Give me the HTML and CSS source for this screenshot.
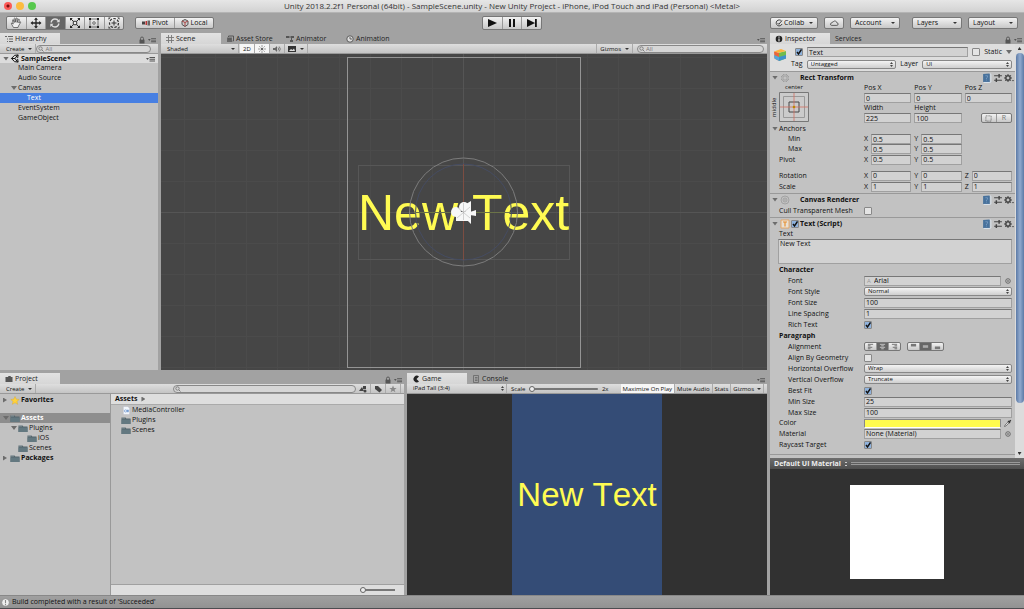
FILE: index.html
```html
<!DOCTYPE html>
<html lang="en">

<head>
    <meta charset="utf-8">
    <meta name="viewport" content="width=device-width, initial-scale=1.0">
    <title>Unity 2018.2.2f1 Personal (64bit) - SampleScene.unity</title>
    <link rel="stylesheet" href="styles.css">
</head>

<body>
    <svg class="defs" aria-hidden="true">
        <symbol id="folder" viewBox="0 0 10 8"><path d="M.5 1h4l.8 1h4.2v5.500h-9z" fill="#54656c"/><path d="M.5 3h9v4.500h-9z" fill="#637880"/><path d="M1 1.500h3" stroke="#a5b4b8" stroke-width=".6"/></symbol>
        <symbol id="lock" viewBox="0 0 8 8"><path d="M2.500 4V2.500a1.500 1.500 0 0 1 3 0V4" fill="none" stroke="#555" stroke-width=".9"/><path d="M1.500 3.700h5V7.500h-5z" fill="#555"/></symbol>
        <symbol id="menu" viewBox="0 0 9 6"><path d="M0 2h3L1.500 4zM3.500 1H9v1H3.500zM3.500 2.700H9v1H3.500zM3.500 4.400H9v1H3.500z" fill="#555"/></symbol>
        <symbol id="list" viewBox="0 0 8 8"><path d="M0 1.500h2M3 1.500h5M2 4h1M4 4h4M2 6.500h1M4 6.500h4" stroke="#666"/></symbol>
        <symbol id="book" viewBox="0 0 9 9"><path d="M1 1l6-.500V8H1z" fill="#48729c"/><path d="M7 .500l1 .6v7L7 8.500H1.500" fill="none" stroke="#dce6f0" stroke-width=".8"/><path d="M3 2.500h2v1.300L4 4.500v1M4 6v.8" fill="none" stroke="#86a8cc" stroke-width=".6"/></symbol>
        <symbol id="preset" viewBox="0 0 9 9"><path d="M1 2.500h7M1 6.500h7" stroke="#444"/><path d="M5.500 .800v3.400M3 4.800v3.400" stroke="#444" stroke-width="1.300"/></symbol>
        <symbol id="gear" viewBox="0 0 10 9"><circle cx="4" cy="4.500" r="2.200" fill="none" stroke="#444" stroke-width="1.500"/><path d="M4 .5v1.200M4 7.300v1.200M0 4.500h1.200M6.800 4.500H8M1.200 1.700l.9.9M6 6.400l.9.900M1.200 7.300l.9-.9M6 2.600l.9-.9" stroke="#444"/><path d="M8 6.500h2L9 8z" fill="#444"/></symbol>
        <symbol id="target" viewBox="0 0 8 8"><circle cx="4" cy="4" r="2.300" fill="none" stroke="#555" stroke-width=".8"/><circle cx="4" cy="4" r=".8" fill="#555"/></symbol>
    </svg>

    <div class="app">
        <header class="titlebar">
            <div class="lights"><i class="red"></i><i class="amber"></i><i class="green"></i></div>
            <h1>Unity 2018.2.2f1 Personal (64bit) - SampleScene.unity - New Unity Project - iPhone, iPod Touch and iPad (Personal) &lt;Metal&gt;</h1>
        </header>

        <div class="toolbar">
            <div class="tools">
                <div class="group">
                    <button aria-label="Hand"><svg viewBox="0 0 12 12"><path d="M3.500 10.500L1.500 7q-.5-1.200.5-1l1.300 1L2.500 3.500q0-1 .8-.7l1 2.700-.2-4q.5-1 1.100 0l.5 3.700.5-4q.8-.8 1.100.1L7.200 5.500l1.200-3.300q.9-.5.9.5L8.800 6l1-1.200q1-.2.8.7L8.500 9 8 10.500z" fill="#eee" stroke="#444" stroke-width=".7"/></svg></button>
                    <button aria-label="Move"><svg viewBox="0 0 12 12"><path d="M6 2v8M2 6h8" stroke="#222" stroke-width="1.300"/><path d="M6 .5l2 2.300H4zM6 11.500l2-2.300H4zM.5 6l2.300-2v4zM11.500 6L9.200 4v4z" fill="#222"/></svg></button>
                    <button aria-label="Rotate" class="on"><svg viewBox="0 0 12 12"><path d="M2 5.500Q3 2 6 2q2.500 0 3.500 2M10 6.500Q9 10 6 10q-2.500 0-3.500-2" fill="none" stroke="#ddd" stroke-width="1.300"/><path d="M10.700 2v3.300H7.500zM1.300 10V6.700h3.200z" fill="#ddd"/></svg></button>
                    <button aria-label="Scale"><svg viewBox="0 0 12 12"><path d="M1.500 1.500l9 9M10.500 1.500l-9 9" stroke="#333"/><path d="M4.300 4.300h3.400v3.400H4.300z" fill="#eee" stroke="#333"/><path d="M1 1h2.800L1 3.800zM11 1v2.800L8.200 1zM1 11V8.200L3.800 11zM11 11H8.200L11 8.200z" fill="#222"/></svg></button>
                    <button aria-label="Rect"><svg viewBox="0 0 12 12"><path d="M2 2h8v8H2z" fill="none" stroke="#555" stroke-width=".8"/><circle cx="6" cy="6" r="1.300" fill="none" stroke="#555" stroke-width=".8"/><path d="M1 1h2v2H1zM9 1h2v2H9zM1 9h2v2H1zM9 9h2v2H9z" fill="#222"/></svg></button>
                    <button aria-label="Transform"><svg viewBox="0 0 12 12"><circle cx="6" cy="6" r="4.500" fill="none" stroke="#333" stroke-width="1.200" stroke-dasharray="2.500 1.500"/><path d="M6 3.500v5M3.500 6h5" stroke="#333"/><path d="M.5.5h2.300L.5 2.800zM11.500.5v2.300L9.200.5zM.5 11.500V9.200l2.300 2.300zM11.500 11.500H9.200l2.300-2.300z" fill="#333"/></svg></button>
                </div>
                <div class="group pivots">
                    <button><svg viewBox="0 0 8 8"><path d="M0 2.500h3v3H0z" fill="#444"/><path d="M3.500 2h1.500v4H3.500z" fill="#b33"/><path d="M5.500 1.500H8v5H5.500z" fill="#666"/></svg>Pivot</button>
                    <button><svg viewBox="0 0 8 8"><path d="M4 .5L7 2v3.500L4 7.500 1 5.500V2z" fill="#ccc" stroke="#555"/><path d="M1 2l3 1.500L7 2M4 3.500v4" stroke="#a44" fill="none"/></svg>Local</button>
                </div>
            </div>
            <div class="group play">
                <button aria-label="Play"><svg viewBox="0 0 12 12"><path d="M2 2l9 4-9 4z" fill="#111"/></svg></button>
                <button aria-label="Pause"><svg viewBox="0 0 12 12"><path d="M3 2h2v8H3zM7 2h2v8H7z" fill="#111"/></svg></button>
                <button aria-label="Step"><svg viewBox="0 0 12 12"><path d="M1 2l8 4-8 4zM9 2h1.800v8H9z" fill="#111"/></svg></button>
            </div>
            <div class="menus">
                <button class="drop"><svg viewBox="0 0 8 8"><path d="M6.500 2A3 3 0 1 0 7 5" fill="none" stroke="#444"/><path d="M2.500 4l1.300 1.300L7 1.500" fill="none" stroke="#444"/></svg>Collab</button>
                <button class="cloud" aria-label="Services"><svg viewBox="0 0 12 10"><path d="M3 8h6.500a1.600 1.600 0 0 0 0-3.300A2.500 2.500 0 0 0 5 3.500 2 2 0 0 0 3.200 5 1.500 1.500 0 0 0 3 8z" fill="none" stroke="#333" stroke-width=".9"/></svg></button>
                <button class="drop wide">Account</button>
                <button class="drop wide gap">Layers</button>
                <button class="drop wide">Layout</button>
            </div>
        </div>

        <main class="workspace">
            <div class="left">
                <div class="upper">
                    <section class="panel hierarchy">
                        <nav class="tabs">
                            <button class="tab on"><svg><use href="#list"/></svg>Hierarchy</button>
                            <span class="corner"><svg><use href="#lock"/></svg><svg><use href="#menu"/></svg></span>
                        </nav>
                        <div class="bar">
                            <button class="drop flat">Create</button>
                            <input class="search" type="search" placeholder="All" aria-label="Search hierarchy">
                        </div>
                        <ul class="tree">
                            <li class="scene"><i class="fold"></i><svg viewBox="0 0 10 10"><path d="M1 5l3.500-3.500L8.500 1l-.6 3.500M1 5l3.500 3.500 4 .5-.6-3.500M1 5h4l3-4M5 5l3 4" fill="none" stroke="#111" stroke-width="1.100"/></svg><b>SampleScene*</b><svg class="more"><use href="#menu"/></svg></li>
                            <li class="in1">Main Camera</li>
                            <li class="in1">Audio Source</li>
                            <li class="in1 folded"><i class="fold"></i>Canvas</li>
                            <li class="in2 picked">Text</li>
                            <li class="in1">EventSystem</li>
                            <li class="in1">GameObject</li>
                        </ul>
                    </section>

                    <section class="panel scene-panel">
                        <nav class="tabs">
                            <button class="tab on"><svg viewBox="0 0 8 8"><path d="M2.500 0v8M5.500 0v8M0 2.500h8M0 5.500h8" stroke="#777" stroke-width=".9"/></svg>Scene</button>
                            <button class="tab"><svg viewBox="0 0 8 8"><path d="M1 2.500h5V7H1z" fill="#666"/><path d="M2.500 2V1h5v5h-1M2 4h3" stroke="#555" fill="none"/></svg>Asset Store</button>
                            <button class="tab"><svg viewBox="0 0 8 8"><path d="M0 1h3v2H0zM5 1h3v2H5zM4 5h3v2H4z" fill="#555"/><path d="M3 2h2M5.500 3v2" stroke="#555"/></svg>Animator</button>
                            <button class="tab"><svg viewBox="0 0 8 8"><circle cx="4" cy="4" r="3.200" fill="#ddd" stroke="#444" stroke-width=".8"/><path d="M4 2v2h2" stroke="#444" fill="none" stroke-width=".8"/></svg>Animation</button>
                            <span class="corner"><svg><use href="#menu"/></svg></span>
                        </nav>
                        <div class="bar">
                            <button class="drop flat shading">Shaded</button>
                            <button class="flat lit">2D</button>
                            <button class="flat lit" aria-label="Lighting"><svg viewBox="0 0 8 8"><circle cx="4" cy="4" r="1.300" fill="#666"/><path d="M4 0v2M4 6v2M0 4h2M6 4h2M1.200 1.200l1.300 1.300M5.500 5.500l1.300 1.300M1.200 6.800l1.300-1.300M5.500 2.500l1.300-1.300" stroke="#666" stroke-width=".6"/></svg></button>
                            <button class="flat" aria-label="Audio"><svg viewBox="0 0 8 8"><path d="M0 3h2l2-2v6L2 5H0z" fill="#666"/><path d="M5 2.500q1.300 1.500 0 3M6.200 1.500q2.200 2.500 0 5" fill="none" stroke="#666" stroke-width=".8"/></svg></button>
                            <button class="flat drop" aria-label="Effects"><svg viewBox="0 0 8 8"><path d="M0 1h8v6H0z" fill="#333"/><path d="M1 6l2-2 1.500 1L6 3.500 7 6z" fill="#ddd"/></svg></button>
                            <span class="grow"></span>
                            <button class="drop flat first">Gizmos</button>
                            <input class="search fixed" type="search" placeholder="All" aria-label="Search scene">
                        </div>
                        <svg class="scene-view" viewBox="0 0 606 316" preserveAspectRatio="xMidYMid slice">
                            <defs>
                                <pattern id="grid" width="31" height="31" x="23" y="3" patternUnits="userSpaceOnUse"><path d="M.5 0v31M0 .5h31" stroke="#4b4b4b" fill="none"/></pattern>
                            </defs>
                            <rect width="606" height="316" fill="#464646"/>
                            <rect width="606" height="316" fill="url(#grid)"/>
                            <path d="M302.500 0v316M0 158.500h606" stroke="#555"/>
                            <rect x="186.500" y="3.500" width="233" height="310" fill="none" stroke="#949494"/>
                            <rect x="197.500" y="111.500" width="211" height="94" fill="none" stroke="#575757"/>
                            <text x="197" y="176">New Text</text>
                            <circle cx="302.500" cy="158" r="54" fill="none" stroke="#7c7c7c"/>
                            <circle cx="302.500" cy="158" r="48" fill="none" stroke="#454c62"/>
                            <path d="M302.500 110v96" stroke="#7c4d42"/>
                            <path d="M254 158.500h96" stroke="#6b7348"/>
                            <g fill="#f7f7f7"><circle cx="295" cy="158" r="5"/><circle cx="303" cy="153" r="5"/><path d="M295 158h12v9h-12zM305 150l5-3v23l-6-6zM309 158l6-2v6l-6-1z"/></g>
                            <path d="M302.500 149v17M296 153l13 11M309 153l-13 11" stroke="#aaa" stroke-width=".5"/>
                        </svg>
                    </section>
                </div>

                <div class="lower">
                    <section class="panel project">
                        <nav class="tabs">
                            <button class="tab on"><svg viewBox="0 0 8 8"><path d="M.5 2H3l.5-1h2L6 2h1.500v5h-7z" fill="#555"/></svg>Project</button>
                            <span class="corner"><svg><use href="#lock"/></svg><svg><use href="#menu"/></svg></span>
                        </nav>
                        <div class="bar">
                            <button class="drop flat">Create</button>
                            <span class="grow"></span>
                            <input class="search long" type="search" aria-label="Search project">
                            <button class="flat" aria-label="By type"><svg viewBox="0 0 8 8"><path d="M0 6l3-4 2 4zM4 1h3v3H4z" fill="#444"/><circle cx="6" cy="6" r="1.500" fill="#444"/></svg></button>
                            <button class="flat" aria-label="By label"><svg viewBox="0 0 8 8"><path d="M1 1h3l4 4-2.500 2.500L1 4z" fill="#444"/></svg></button>
                            <button class="flat" aria-label="Save search"><svg viewBox="0 0 8 8"><path d="M4 .5l1 2.500h2.600L5.500 4.700l.9 2.600L4 5.700 1.600 7.300l.9-2.600L.4 3H3z" fill="#888"/></svg></button>
                        </div>
                        <div class="browser">
                            <ul class="tree">
                                <li class="fav"><i class="fold shut"></i><svg viewBox="0 0 10 10"><path d="M5 .5l1.400 3 3.300.3L7.200 6l.8 3.300-3-1.800-3 1.800L2.800 6 .3 3.800l3.300-.3z" fill="#ffd23c" stroke="#d8a520" stroke-width=".4"/></svg><b>Favorites</b></li>
                                <li class="chosen"><i class="fold"></i><svg><use href="#folder"/></svg><b>Assets</b></li>
                                <li class="sub1"><i class="fold"></i><svg><use href="#folder"/></svg>Plugins</li>
                                <li class="sub3"><svg><use href="#folder"/></svg>iOS</li>
                                <li class="sub2"><svg><use href="#folder"/></svg>Scenes</li>
                                <li><i class="fold shut"></i><svg><use href="#folder"/></svg><b>Packages</b></li>
                            </ul>
                            <div class="files">
                                <div class="crumbs"><b>Assets</b><i class="fold shut"></i></div>
                                <ul class="tree">
                                    <li><svg viewBox="0 0 10 10"><path d="M2 .5h5L9 2.500v7H2z" fill="#f2f6fb" stroke="#aab" stroke-width=".4"/><path d="M5 4.500a1.200 1.200 0 1 0 0 2M6 4v3M7.300 4v3M5.500 5h2.500M5.500 6h2.500" stroke="#4a7cc4" fill="none" stroke-width=".6"/></svg>MediaController</li>
                                    <li><svg><use href="#folder"/></svg>Plugins</li>
                                    <li><svg><use href="#folder"/></svg>Scenes</li>
                                </ul>
                                <div class="foot"><input class="zoom" type="range" value="0" aria-label="Icon size"></div>
                            </div>
                        </div>
                    </section>

                    <section class="panel game">
                        <nav class="tabs">
                            <button class="tab on"><svg viewBox="0 0 8 8"><path d="M7 1.500A3.300 3.300 0 1 0 7 6.500L4.500 4z" fill="#222"/></svg>Game</button>
                            <button class="tab"><svg viewBox="0 0 8 8"><path d="M1.500.5h5v7h-5zM3 2.500h2.500M3 4h2.500M3 5.500h2.500" stroke="#666" fill="none" stroke-width=".8"/></svg>Console</button>
                            <span class="corner"><svg><use href="#menu"/></svg></span>
                        </nav>
                        <div class="bar">
                            <select class="aspect" aria-label="Aspect"><option>iPad Tall (3:4)</option></select>
                            <label for="scale">Scale</label>
                            <input id="scale" class="zoom grow" type="range" value="0">
                            <span class="times">2x</span>
                            <button class="flat lit">Maximize On Play</button>
                            <button class="flat">Mute Audio</button>
                            <button class="flat">Stats</button>
                            <button class="flat drop">Gizmos</button>
                        </div>
                        <div class="game-view"><div class="screen">New Text</div></div>
                    </section>
                </div>
            </div>

            <aside class="panel inspector">
                <nav class="tabs">
                    <button class="tab on"><svg viewBox="0 0 8 8"><circle cx="4" cy="4" r="3.300" fill="#222"/><path d="M4 1.500v1.200M4 3.500v3" stroke="#ddd" stroke-width="1.200"/></svg>Inspector</button>
                    <button class="tab">Services</button>
                    <span class="corner"><svg><use href="#lock"/></svg><svg><use href="#menu"/></svg></span>
                </nav>
                <div class="scroller">
                    <div class="props">
                        <div class="object">
                            <svg class="cube" viewBox="0 0 14 14"><path d="M1 3.500l5 1.300V13L1.500 10.500z" fill="#e8673c"/><path d="M1 7l5 2v4L1.500 10.500z" fill="#50a8dc"/><path d="M6 4.800L13 3v7.500L6 13z" fill="#70bc4c"/><path d="M1 3.500L8 1l5 2-7 1.800z" fill="#ffb43c"/><path d="M6 9l7-2v3.500L6 13z" fill="#3f90cc"/></svg>
                            <div class="object-rows">
                                <div class="line">
                                    <input type="checkbox" checked aria-label="Active">
                                    <input class="grow" type="text" value="Text" aria-label="Name">
                                    <input type="checkbox" id="static"><label for="static">Static</label><i class="fold"></i>
                                </div>
                                <div class="line">
                                    <label for="tag">Tag</label><select id="tag" class="grow"><option>Untagged</option></select>
                                    <label for="layer">Layer</label><select id="layer" class="grow"><option>UI</option></select>
                                </div>
                            </div>
                        </div>

                        <div class="head"><i class="fold"></i><svg viewBox="0 0 10 10"><path d="M4 4H1l3-3zM6 4V1l3 3zM4 6v3L1 6zM6 6h3L6 9z" fill="none" stroke="#999" stroke-width=".8"/></svg><span class="tick"></span><b>Rect Transform</b>
                            <svg class="act"><use href="#book"/></svg><svg><use href="#preset"/></svg><svg><use href="#gear"/></svg></div>
                        <div class="rect">
                            <div class="anchor">
                                <span class="h">center</span><span class="v">middle</span>
                                <svg viewBox="0 0 30 30"><path d="M.5.5h29v29H.5z" fill="#cbcbcb" stroke="#777"/><path d="M4.500 4.500h21v21h-21z" fill="none" stroke="#999"/><path d="M10 10h10v10H10z" fill="none" stroke="#444"/><path d="M15 1v28M1 15h28" stroke="#d07060" stroke-width=".8"/><circle cx="15" cy="15" r="1.300" fill="#b80"/></svg>
                            </div>
                            <div class="cells">
                                <label for="px">Pos X</label><label for="py">Pos Y</label><label for="pz">Pos Z</label>
                                <input type="text" id="px" value="0"><input type="text" id="py" value="0"><input type="text" id="pz" value="0">
                                <label for="w">Width</label><label for="h">Height</label><span></span>
                                <input type="text" id="w" value="225"><input type="text" id="h" value="100">
                                <div class="group raw"><button aria-label="Blueprint mode"><svg viewBox="0 0 8 8"><path d="M1 1h6v6H1z" fill="none" stroke="#555" stroke-dasharray="1 1"/></svg></button><button>R</button></div>
                            </div>
                        </div>
                        <div class="line fold-line"><i class="fold"></i>Anchors</div>
                        <div class="row sub short"><span>Min</span><div class="xyz"><label>X<input type="text" value="0.5"></label><label>Y<input type="text" value="0.5"></label></div></div>
                        <div class="row sub short"><span>Max</span><div class="xyz"><label>X<input type="text" value="0.5"></label><label>Y<input type="text" value="0.5"></label></div></div>
                        <div class="row"><span>Pivot</span><div class="xyz"><label>X<input type="text" value="0.5"></label><label>Y<input type="text" value="0.5"></label></div></div>
                        <div class="row spaced"><span>Rotation</span><div class="xyz"><label>X<input type="text" value="0"></label><label>Y<input type="text" value="0"></label><label>Z<input type="text" value="0"></label></div></div>
                        <div class="row"><span>Scale</span><div class="xyz"><label>X<input type="text" value="1"></label><label>Y<input type="text" value="1"></label><label>Z<input type="text" value="1"></label></div></div>

                        <div class="head next"><i class="fold"></i><svg viewBox="0 0 10 10"><circle cx="5" cy="5" r="4" fill="none" stroke="#999" stroke-width=".8"/><circle cx="5" cy="5" r="2" fill="none" stroke="#999" stroke-width=".8"/><circle cx="5" cy="5" r=".8" fill="#999"/></svg><span class="tick"></span><b>Canvas Renderer</b>
                            <svg class="act"><use href="#book"/></svg><svg><use href="#preset"/></svg><svg><use href="#gear"/></svg></div>
                        <div class="row"><label for="cull">Cull Transparent Mesh</label><input type="checkbox" id="cull"></div>

                        <div class="head next"><i class="fold"></i><svg viewBox="0 0 10 10"><path d="M1 1h8v8H1z" fill="#e8e0d4" stroke="#e8a050" stroke-width=".8"/><path d="M3 3h4M5 3v4.500" stroke="#e89030" stroke-width="1.200"/></svg><span class="tick"><input type="checkbox" checked aria-label="Enabled"></span><b>Text (Script)</b>
                            <svg class="act"><use href="#book"/></svg><svg><use href="#preset"/></svg><svg><use href="#gear"/></svg></div>
                        <div class="row short"><label for="body">Text</label></div>
                        <textarea id="body">New Text</textarea>
                        <div class="row"><b>Character</b></div>
                        <div class="row sub"><label for="font">Font</label><div class="pick"><span class="aa">A</span><input type="text" id="font" class="with-icon" value="Arial"><svg><use href="#target"/></svg></div></div>
                        <div class="row sub"><label for="fstyle">Font Style</label><select id="fstyle"><option>Normal</option></select></div>
                        <div class="row sub"><label for="fsize">Font Size</label><input type="text" id="fsize" value="100"></div>
                        <div class="row sub"><label for="lsp">Line Spacing</label><input type="text" id="lsp" value="1"></div>
                        <div class="row sub"><label for="rich">Rich Text</label><input type="checkbox" id="rich" checked></div>
                        <div class="row"><b>Paragraph</b></div>
                        <div class="row sub"><span>Alignment</span>
                            <div class="aligns">
                                <div class="group"><button aria-label="Left"><svg viewBox="0 0 8 8"><path d="M1 1.500h6M1 3.200h3M1 4.900h5M1 6.600h3" stroke="#666"/></svg></button><button class="on" aria-label="Center"><svg viewBox="0 0 8 8"><path d="M1 1.500h6M2.500 3.200h3M1 4.900h6M2.500 6.600h3" stroke="#ccc"/></svg></button><button aria-label="Right"><svg viewBox="0 0 8 8"><path d="M1 1.500h6M4 3.200h3M2 4.900h5M4 6.600h3" stroke="#666"/></svg></button></div>
                                <div class="group"><button aria-label="Top"><svg viewBox="0 0 8 8"><path d="M1 1h6v3H1z" fill="#777"/></svg></button><button class="on" aria-label="Middle"><svg viewBox="0 0 8 8"><path d="M1 2.500h6v3H1z" fill="#aaa"/></svg></button><button aria-label="Bottom"><svg viewBox="0 0 8 8"><path d="M1 4h6v3H1z" fill="#777"/></svg></button></div>
                            </div>
                        </div>
                        <div class="row sub"><label for="geo">Align By Geometry</label><input type="checkbox" id="geo"></div>
                        <div class="row sub"><label for="ho">Horizontal Overflow</label><select id="ho"><option>Wrap</option></select></div>
                        <div class="row sub"><label for="vo">Vertical Overflow</label><select id="vo"><option>Truncate</option></select></div>
                        <div class="row sub"><label for="fit">Best Fit</label><input type="checkbox" id="fit" checked></div>
                        <div class="row sub"><label for="min">Min Size</label><input type="text" id="min" value="25"></div>
                        <div class="row sub"><label for="max">Max Size</label><input type="text" id="max" value="100"></div>
                        <div class="row short"><span>Color</span><div class="pick"><button class="swatch" aria-label="Color"></button><svg viewBox="0 0 8 8"><path d="M.5 7.500L1 6l3.500-3.500 1 1L2 7z" fill="#ddd" stroke="#444" stroke-width=".6"/><path d="M4 2l2 2M5 3l1.800-1.800" stroke="#333" stroke-width="1.400"/></svg></div></div>
                        <div class="row"><label for="mat">Material</label><div class="pick"><input type="text" id="mat" value="None (Material)"><svg><use href="#target"/></svg></div></div>
                        <div class="row"><label for="ray">Raycast Target</label><input type="checkbox" id="ray" checked></div>
                        <div class="head cut"></div>
                    </div>
                    <div class="scrollbar"><span class="up"></span><span class="thumb"></span><span class="rest"></span><span class="down"></span></div>
                </div>
                <div class="preview-bar"><b>Default UI Material</b><i></i><span></span></div>
                <div class="preview"><div class="quad"></div></div>
            </aside>
        </main>

        <footer class="status">
            <svg viewBox="0 0 10 10"><circle cx="5" cy="5" r="4.200" fill="#eee" stroke="#777" stroke-width=".6"/><path d="M5 2.300v3.500M5 6.800v1.200" stroke="#888" stroke-width="1.200"/></svg>
            Build completed with a result of 'Succeeded'
        </footer>
    </div>
</body>

</html>
```
FILE: styles.css
```css
* {
    box-sizing: border-box;
}

body {
    margin: 0;
    font: 7px/10px "Open Sans", "Noto Sans", sans-serif;
    font-weight: 500;
    color: #111;
    background: #a2a2a2;
}

button, input, select, textarea {
    appearance: none;
    margin: 0;
    padding: 0;
    border: 0;
    border-radius: 0;
    font: inherit;
    color: inherit;
    background: none;
}

ul {
    list-style: none;
    margin: 0;
    padding: 0;
}

svg {
    width: 8px;
    height: 8px;
    flex: none;
}

.defs {
    display: none;
}

.grow {
    flex: 1;
    min-width: 0;
}

.app {
    display: flex;
    flex-direction: column;
    height: 100vh;
    border-bottom: 1px solid #4c4c50;
}

/* window title */
.titlebar {
    display: grid;
    grid-template-columns: 1fr auto 1fr;
    align-items: center;
    height: 13px;
    background: linear-gradient(#e6e6e6, #d2d2d2);
    border-bottom: 1px solid #b4b4b4;
}

.titlebar h1 {
    margin: 0;
    font: 8px/12px "Open Sans", sans-serif;
    color: #333;
}

.lights {
    display: flex;
    gap: 4px;
    padding-left: 4px;
}

.lights i {
    width: 8px;
    height: 8px;
    border-radius: 50%;
}

.red {
    background: radial-gradient(#7a1010 1px, #fc5b57 2px);
}

.amber {
    background: #fcbc40;
}

.green {
    background: #57c84d;
}

/* main toolbar */
.toolbar {
    display: grid;
    grid-template-columns: 1fr auto 1fr;
    align-items: center;
    height: 20px;
    padding: 0 6px;
}

.tools, .menus {
    display: flex;
    align-items: center;
}

.menus {
    justify-content: flex-end;
    gap: 6px;
}

.group {
    display: flex;
    border: 1px solid #777;
    border-radius: 2px;
    background: linear-gradient(#f2f2f2, #c8c8c8);
}

.group button {
    display: flex;
    flex: 1;
    align-items: center;
    justify-content: center;
}

.group button + button {
    border-left: 1px solid #999;
}

.group .on {
    background: #666;
}

.tools .group, .play {
    width: 118px;
    height: 14px;
}

.tools svg, .play svg {
    width: 12px;
    height: 12px;
}

.play {
    width: 60px;
}

.tools .pivots {
    width: 79px;
    height: 12px;
    margin-left: 11px;
    font-size: 7px;
}

.pivots button {
    gap: 2px;
}

.pivots svg {
    width: 8px;
    height: 8px;
}

.menus button {
    display: flex;
    align-items: center;
    height: 12px;
    padding: 0 4px;
    font-size: 7px;
    border: 1px solid #777;
    border-radius: 2px;
    background: linear-gradient(#f2f2f2, #c8c8c8);
}

.menus .wide {
    width: 50px;
}

.menus .gap {
    margin-left: 6px;
}

.menus .cloud {
    width: 20px;
}

.cloud svg {
    width: 10px;
}

.menus button svg {
    margin-right: 1px;
}

.drop::after {
    content: "";
    margin-left: auto;
    border: 2px solid transparent;
    border-top-color: #333;
    border-bottom: 0;
}

.menus .drop {
    min-width: 48px;
}

/* panels */
.workspace {
    display: grid;
    grid-template-columns: 767fr 254fr;
    gap: 3px;
    flex: 1;
    min-height: 0;
}

.left {
    display: grid;
    grid-template-rows: 337fr 222fr;
    gap: 3px;
    min-height: 0;
}

.upper, .lower {
    display: grid;
    grid-template-columns: 158fr 606fr;
    gap: 3px;
    min-height: 0;
}

.lower {
    grid-template-columns: 404fr 360fr;
}

.panel {
    display: flex;
    flex-direction: column;
    min-width: 0;
    min-height: 0;
}

.tabs {
    display: flex;
    height: 11px;
    flex: none;
    font-size: 7px;
}

.tab {
    display: flex;
    align-items: center;
    gap: 2px;
    min-width: 60px;
    padding: 0 5px;
    color: #222;
}

.tab.on {
    background: linear-gradient(#e2e2e2, #d6d6d6);
}

.corner {
    display: flex;
    align-items: flex-end;
    gap: 2px;
    margin-left: auto;
    padding-right: 2px;
}

.bar {
    display: flex;
    align-items: center;
    height: 10px;
    flex: none;
    padding: 0 3px;
    font-size: 6px;
    background: linear-gradient(#dedede, #c4c4c4);
    border-bottom: 1px solid #999;
}

.flat {
    display: flex;
    align-items: center;
    gap: 4px;
    height: 9px;
    padding: 0 3px;
    border-right: 1px solid #aaa;
    font-size: 6px;
    white-space: nowrap;
}

.flat.first {
    border-left: 1px solid #aaa;
}

.lit {
    background: #f6f6f6;
}

.shading {
    width: 75px;
    margin-right: 1px;
}

.search {
    flex: 1;
    min-width: 0;
    height: 8px;
    margin-left: 4px;
    padding-left: 8px;
    border: 1px solid #888;
    border-radius: 4px;
    font-size: 6px;
    line-height: 6px;
    background: #d6d6d6 url("data:image/svg+xml,%3Csvg xmlns='http://www.w3.org/2000/svg' width='8' height='6'%3E%3Ccircle cx='3.500' cy='2.500' r='1.700' fill='none' stroke='%23666' stroke-width='.7'/%3E%3Cpath d='M5 4l1.500 1.500' stroke='%23666' stroke-width='.8'/%3E%3C/svg%3E") no-repeat;
}

.search::placeholder {
    color: #777;
}

.search.fixed {
    flex: 0 0 127px;
}

.search.long {
    flex: 0 0 183px;
}

.hierarchy .search {
    margin-left: 0;
    margin-right: 4px;
}

/* trees */
.hierarchy, .project {
    background: linear-gradient(#a2a2a2 11px, #c2c2c2 11px);
}

.tree li {
    display: flex;
    align-items: center;
    height: 10px;
    padding-left: 3px;
}

.tree li svg {
    width: 10px;
    height: 9px;
    margin-right: 1px;
}

.fold {
    flex: none;
    width: 6px;
    height: 4px;
    margin-right: 1px;
    background: #6c6c6c;
    clip-path: polygon(0 0, 100% 0, 50% 100%);
}

.fold.shut {
    width: 4px;
    height: 5px;
    margin-right: 3px;
    clip-path: polygon(0 0, 100% 50%, 0 100%);
}

.tree .scene {
    height: 9px;
    background: #dcdcdc;
}

.tree .scene .more {
    width: 9px;
    height: 6px;
    margin-left: auto;
    margin-right: 3px;
}

.tree .in1 {
    padding-left: 18px;
}

.tree .folded {
    padding-left: 11px;
}

.tree .in2 {
    padding-left: 27px;
}

.tree .picked {
    color: #fff;
    background: #477fe2;
}

.browser {
    display: flex;
    flex: 1;
    min-height: 0;
}

.browser > .tree {
    width: 111px;
    padding-top: 1px;
    border-right: 1px solid #999;
}

.tree .fav {
    margin-bottom: 8px;
}

.tree .chosen {
    color: #fff;
    background: #8e8e8e;
}

.tree .sub1 {
    padding-left: 11px;
}

.tree .sub2 {
    padding-left: 18px;
}

.tree .sub3 {
    padding-left: 27px;
}

.files {
    display: flex;
    flex-direction: column;
    flex: 1;
}

.files .tree {
    flex: 1;
}

.files .tree li {
    padding-left: 10px;
}

.crumbs {
    display: flex;
    align-items: center;
    gap: 4px;
    height: 11px;
    padding-left: 4px;
    background: #dedede;
    border-bottom: 1px solid #aaa;
}

.foot {
    display: flex;
    align-items: center;
    justify-content: flex-end;
    height: 11px;
    padding-right: 9px;
    background: #dedede;
    border-top: 1px solid #a0a0a0;
}

.zoom {
    width: 35px;
    height: 8px;
    background: linear-gradient(#777, #777) no-repeat center / 100% 2px;
}

.zoom::-webkit-slider-thumb {
    appearance: none;
    width: 6px;
    height: 6px;
    border: 1px solid #666;
    border-radius: 50%;
    background: #eee;
}

/* views */
.scene-view {
    flex: 1;
    width: 100%;
    min-height: 0;
}

.scene-view text {
    font: 50px "Liberation Sans", sans-serif;
    font-kerning: none;
    fill: #fffb52;
}

.game .bar label {
    padding: 0 4px;
}

.game .bar .flat {
    gap: 3px;
    padding: 0 2px;
}

.aspect {
    width: 97px;
}

.game .times {
    padding: 0 12px 0 4px;
}

.game-view {
    display: flex;
    justify-content: center;
    flex: 1;
    min-height: 0;
    background: #313131;
}

.screen {
    display: grid;
    place-items: center;
    height: 100%;
    aspect-ratio: 3 / 4;
    font: 33px "Liberation Sans", sans-serif;
    font-kerning: none;
    white-space: nowrap;
    color: #fffb52;
    background: #344c76;
}

/* inspector */
.scroller {
    display: flex;
    flex: none;
    background: #c2c2c2;
}

.props {
    flex: 1;
    min-width: 0;
}

.object {
    display: flex;
    gap: 4px;
    height: 27px;
    padding: 2px 3px 0;
    background: #dedede;
}

.cube {
    width: 14px;
    height: 14px;
    margin-top: 2px;
}

.object-rows {
    flex: 1;
}

.line {
    display: flex;
    align-items: center;
    gap: 4px;
    height: 12px;
}

.object .line:first-child {
    padding-left: 4px;
}

.object .line:first-child .fold {
    margin-right: 0;
}

.fold-line {
    gap: 0;
    height: 11px;
    padding-left: 2px;
}

input[type=text], textarea {
    min-width: 0;
    height: 10px;
    padding: 0 1px;
    line-height: 8px;
    border: 1px solid #a0a0a0;
    border-top-color: #777;
    background: #d2d2d2;
}

input[type=checkbox] {
    width: 8px;
    height: 8px;
    border: 1px solid #888;
    border-radius: 1px;
    background: #e4e4e4;
}

input[type=checkbox]:checked {
    background: #8fb2dc url("data:image/svg+xml,%3Csvg xmlns='http://www.w3.org/2000/svg' width='6' height='6'%3E%3Cpath d='M1 3l1.500 2L5.500.5' fill='none' stroke='%23111' stroke-width='1.400'/%3E%3C/svg%3E") no-repeat center;
}

select {
    height: 9px;
    padding: 0 3px;
    font-size: 6px;
    line-height: 7px;
    border: 1px solid #888;
    border-radius: 2px;
    background: url("data:image/svg+xml,%3Csvg xmlns='http://www.w3.org/2000/svg' width='5' height='5'%3E%3Cpath d='M0 2l1.500-2L3 2zM0 3h3L1.500 5z' fill='%23444'/%3E%3C/svg%3E") no-repeat right center, linear-gradient(#f4f4f4, #cfcfcf);
}

select.aspect {
    border: 0;
    border-right: 1px solid #aaa;
    border-radius: 0;
    background-color: transparent;
    background-image: url("data:image/svg+xml,%3Csvg xmlns='http://www.w3.org/2000/svg' width='5' height='5'%3E%3Cpath d='M0 2l1.500-2L3 2zM0 3h3L1.500 5z' fill='%23444'/%3E%3C/svg%3E");
}

.head {
    display: flex;
    align-items: center;
    height: 12px;
    padding: 0 1px 0 2px;
    border-top: 1px solid #999;
}

.head.next {
    margin-top: 1px;
}

.head svg {
    width: 10px;
    height: 10px;
    margin-left: 1px;
}

.head .act {
    margin-left: auto;
}

.head.cut {
    height: 4px;
    margin-top: 4px;
}

.tick {
    display: flex;
    width: 9px;
    margin-left: 1px;
}

.rect {
    display: flex;
    padding-right: 3px;
}

.anchor {
    display: grid;
    grid-template: 9px 30px / 9px 30px;
    width: 94px;
    flex: none;
    font-size: 6px;
    line-height: 8px;
}

.anchor .h {
    grid-column: 2;
    text-align: center;
}

.anchor .v {
    writing-mode: vertical-rl;
    transform: rotate(180deg);
    text-align: center;
}

.anchor svg {
    width: 30px;
    height: 30px;
}

.cells {
    display: grid;
    grid-template-columns: repeat(3, 1fr);
    grid-auto-rows: 10px;
    gap: 0 3px;
    flex: 1;
    min-width: 0;
}

.cells input {
    width: 100%;
}

.raw {
    justify-self: end;
    width: 31px;
    color: #777;
}

.raw svg {
    width: 7px;
    height: 7px;
}

.row {
    display: grid;
    grid-template-columns: 85px 1fr;
    align-items: center;
    height: 11px;
    padding: 0 3px 0 9px;
}

.row.sub {
    grid-template-columns: 76px 1fr;
    padding-left: 18px;
}

.row.short {
    height: 10px;
}

.row.spaced {
    margin-top: 5px;
}

.row > input[type=text] {
    width: 100%;
}

.row > label, .row > span, .row > b {
    white-space: nowrap;
}

.xyz {
    display: grid;
    grid-template-columns: repeat(3, 1fr);
    gap: 3px;
}

.xyz label {
    display: grid;
    grid-template-columns: 7px 1fr;
}

.xyz input {
    width: 100%;
}

textarea {
    display: block;
    width: calc(100% - 11px);
    height: 25px;
    margin-left: 8px;
    resize: none;
}

.pick {
    display: flex;
    align-items: center;
    gap: 3px;
}

.pick input, .swatch {
    flex: 1;
}

.pick .aa {
    width: 8px;
    margin-right: -11px;
    padding-left: 3px;
    font-size: 6px;
    color: #999;
    z-index: 1;
}

.pick .with-icon {
    padding-left: 9px;
}

.swatch {
    height: 9px;
    border: 1px solid #888;
    border-bottom: 1px solid #fff;
    background: #fffb4e;
}

.aligns {
    display: flex;
    gap: 6px;
}

.aligns .group {
    width: 37px;
    height: 9px;
}

.aligns svg {
    width: 7px;
    height: 7px;
}

.scrollbar {
    display: flex;
    flex-direction: column;
    align-items: center;
    width: 9px;
    background: #dcdcdc;
}

.up, .down {
    width: 4px;
    height: 3px;
    margin: 3px 0;
    background: #333;
    clip-path: polygon(50% 0, 100% 100%, 0 100%);
}

.down {
    clip-path: polygon(0 0, 100% 0, 50% 100%);
}

.thumb {
    flex: 350;
    width: 8px;
    border-radius: 4px;
    background: linear-gradient(90deg, #5c7aa6, #91aace, #5c7aa6);
}

.rest {
    flex: 46;
}

.preview-bar {
    display: flex;
    align-items: center;
    gap: 4px;
    height: 11px;
    flex: none;
    padding: 0 4px;
    color: #eee;
    background: linear-gradient(#6e6e6e, #4e4e4e);
}

.preview-bar i {
    width: 2px;
    height: 4px;
    background: linear-gradient(#ccc 1px, transparent 1px 3px, #ccc 3px);
}

.preview-bar span {
    flex: 1;
    height: 3px;
    border: solid #999;
    border-width: 1px 0;
}

.preview {
    display: grid;
    place-items: center;
    flex: 1;
    min-height: 0;
    background: #313131;
}

.quad {
    height: 74%;
    aspect-ratio: 1;
    background: #fff;
}

.status {
    display: flex;
    align-items: center;
    gap: 2px;
    height: 13px;
    padding-left: 1px;
    border-top: 1px solid #888;
    background: linear-gradient(#a0a0a0, #929292);
}

.status svg {
    width: 9px;
    height: 9px;
}
```
